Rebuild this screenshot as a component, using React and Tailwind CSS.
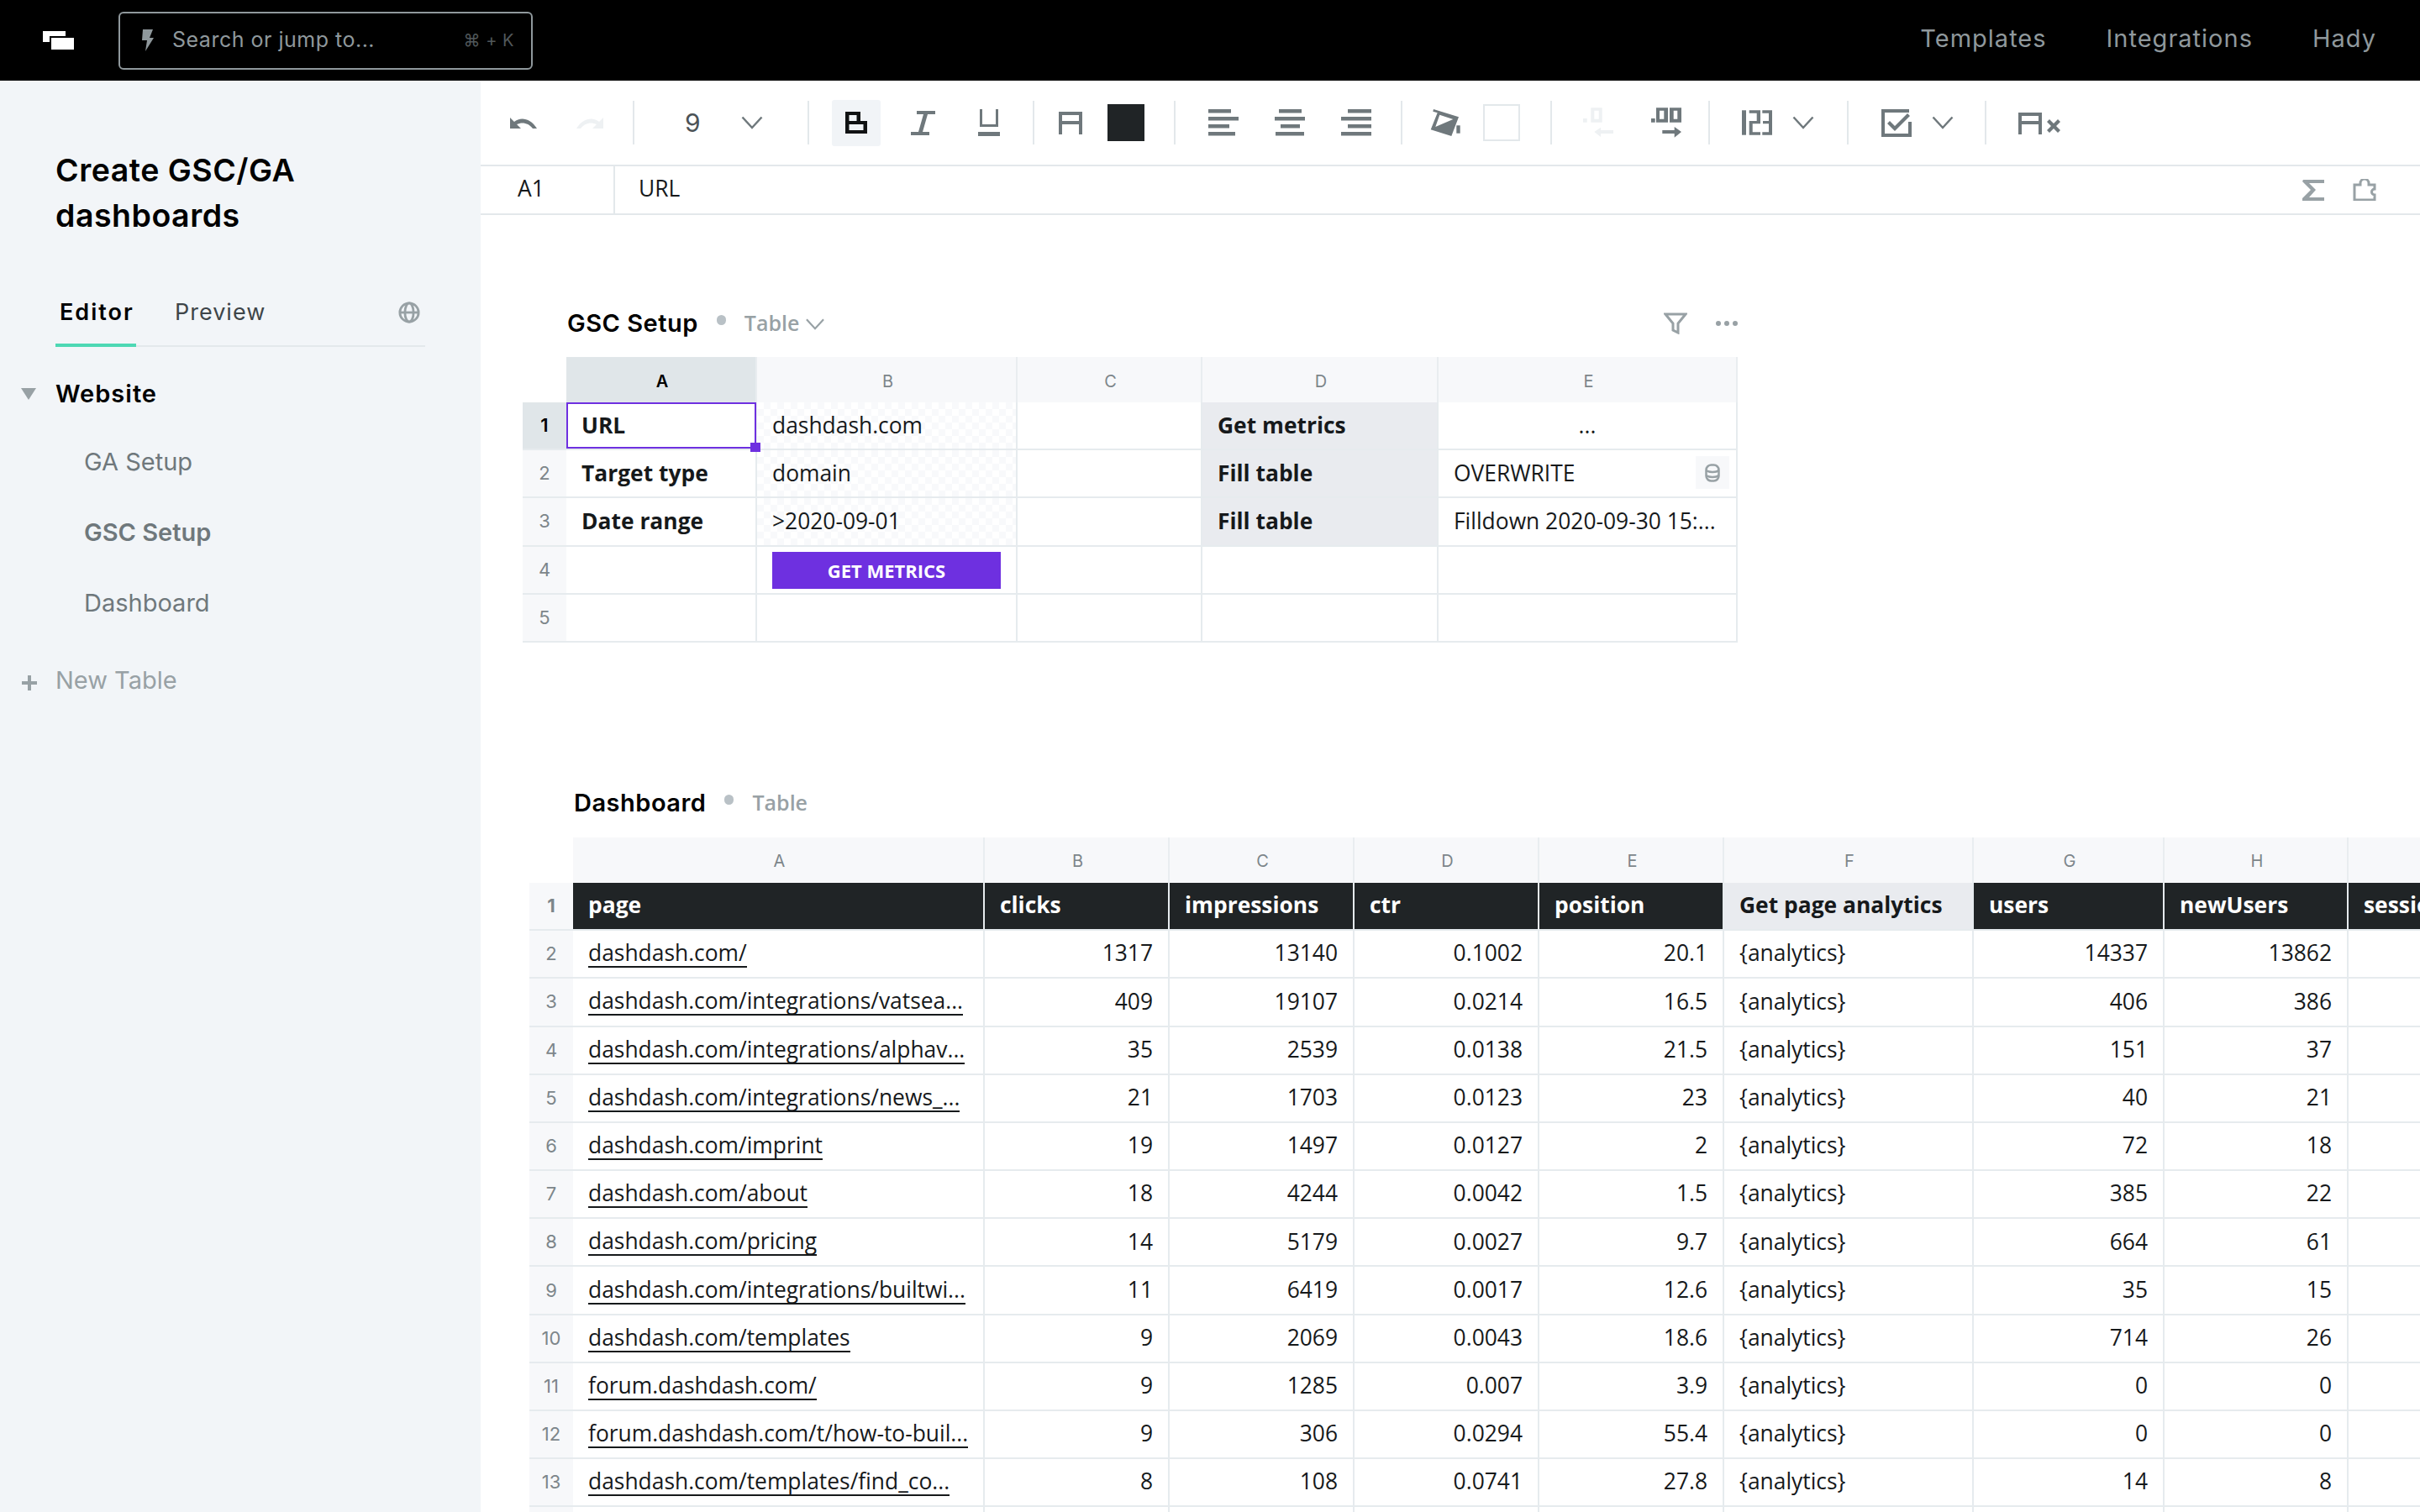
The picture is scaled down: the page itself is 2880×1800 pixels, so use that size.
import React from 'react';

const GROTESK = 'font-["Inter",sans-serif]';
const CELL = 'font-["Open_Sans",sans-serif]';

const SETUP_COLS = [
  { name: 'A', w: 'w-[227px]', active: true },
  { name: 'B', w: 'w-[310px]' },
  { name: 'C', w: 'w-[220px]' },
  { name: 'D', w: 'w-[281px]' },
  { name: 'E', w: 'w-[356px]' },
];

const DASH_COLS = [
  { name: 'A', w: 'w-[490px]', title: 'page' },
  { name: 'B', w: 'w-[220px]', title: 'clicks' },
  { name: 'C', w: 'w-[220px]', title: 'impressions' },
  { name: 'D', w: 'w-[220px]', title: 'ctr' },
  { name: 'E', w: 'w-[220px]', title: 'position' },
  { name: 'F', w: 'w-[297px]', title: 'Get page analytics', light: true },
  { name: 'G', w: 'w-[227px]', title: 'users' },
  { name: 'H', w: 'w-[219px]', title: 'newUsers' },
  { name: 'I', w: 'w-[220px]', title: 'sessions' },
];

const DASH_ROWS = [
  ['dashdash.com/', '1317', '13140', '0.1002', '20.1', '14337', '13862'],
  ['dashdash.com/integrations/vatsea...', '409', '19107', '0.0214', '16.5', '406', '386'],
  ['dashdash.com/integrations/alphav...', '35', '2539', '0.0138', '21.5', '151', '37'],
  ['dashdash.com/integrations/news_...', '21', '1703', '0.0123', '23', '40', '21'],
  ['dashdash.com/imprint', '19', '1497', '0.0127', '2', '72', '18'],
  ['dashdash.com/about', '18', '4244', '0.0042', '1.5', '385', '22'],
  ['dashdash.com/pricing', '14', '5179', '0.0027', '9.7', '664', '61'],
  ['dashdash.com/integrations/builtwi...', '11', '6419', '0.0017', '12.6', '35', '15'],
  ['dashdash.com/templates', '9', '2069', '0.0043', '18.6', '714', '26'],
  ['forum.dashdash.com/', '9', '1285', '0.007', '3.9', '0', '0'],
  ['forum.dashdash.com/t/how-to-buil...', '9', '306', '0.0294', '55.4', '0', '0'],
  ['dashdash.com/templates/find_co...', '8', '108', '0.0741', '27.8', '14', '8'],
];

const GRAY = '#6f787c';
const OFF = '#eef1f3';

function Icon({ w, h, vb, className = '', children }) {
  return (
    <svg width={w} height={h} viewBox={vb} fill="none" className={`shrink-0 ${className}`}>
      {children}
    </svg>
  );
}

function Chevron({ w = 26, h = 16, color = GRAY, className = '' }) {
  return (
    <Icon w={w} h={h} vb="0 0 26 16" className={className}>
      <path d="M1.500 1.500L13 14 24.500 1.500" stroke={color} strokeWidth="2.500" />
    </Icon>
  );
}

function Sep({ className }) {
  return <div className={`w-[2px] h-[52px] bg-[#e3e8eb] shrink-0 ${className}`} />;
}

function AlignIcon({ className, x, widths }) {
  return (
    <Icon w={36} h={32} vb="0 0 36 32" className={className}>
      {x.map((ox, i) => (
        <rect key={i} x={ox} y={i * 9} width={widths[i]} height={4.5} fill={GRAY} />
      ))}
    </Icon>
  );
}

function Toolbar() {
  return (
    <div className="h-[102px] shrink-0 border-b-2 border-[#e3e8eb] flex items-center">
      <Icon w={34} h={16} vb="0 0 34 16" className="ml-[34px]">
        <path d="M1 15V2l5 5c7-6 19-5 27 8h-5C23 8 15 7 9 10l5 5z" fill={GRAY} />
      </Icon>
      <Icon w={38} h={16} vb="0 0 34 16" className="ml-[43px]">
        <path d="M33 15V2l-5 5C21 1 9 2 1 15h5C11 8 19 7 25 10l-5 5z" fill={OFF} />
      </Icon>
      <Sep className="ml-[32px]" />
      <span className={`ml-[60px] w-[17px] shrink-0 text-[30px] leading-none text-[#4c5357] ${GROTESK}`}>9</span>
      <Chevron className="ml-[50px]" />
      <Sep className="ml-[53px]" />
      <div className="ml-[27px] w-[58px] h-[55px] shrink-0 bg-[#f1f4f7] rounded-[3px] flex items-center justify-center">
        <Icon w={28} h={28} vb="0 0 28 28">
          <path d="M1 1h18v11h8v15H1z M5.500 5v7h9V5z M5.500 16v7h17v-7z" fill="#101213" fillRule="evenodd" />
        </Icon>
      </div>
      <Icon w={30} h={29} vb="0 0 30 29" className="ml-[35px]">
        <path d="M8 0h22v4h-9l-6 21h8v4H1v-4h9l6-21H8z" fill={GRAY} />
      </Icon>
      <Icon w={26} h={32} vb="0 0 26 32" className="ml-[51px]">
        <path d="M2 0v21h22V0h-3v18H5V0zM0 27h26v5H0z" fill={GRAY} />
      </Icon>
      <Sep className="ml-[39px]" />
      <Icon w={28} h={27} vb="0 0 28 27" className="ml-[29px]">
        <path d="M0 0h28v27h-4V15H4v12H0zM4 4v7h20V4z" fill={GRAY} fillRule="evenodd" />
      </Icon>
      <div className="ml-[30px] w-[44px] h-[44px] shrink-0 bg-[#202426]" />
      <Sep className="ml-[35px]" />
      <AlignIcon className="ml-[39px]" x={[0, 0, 0, 0]} widths={[27, 36, 25, 32]} />
      <AlignIcon className="ml-[43px]" x={[5, 0, 7, 1]} widths={[27, 36, 23, 34]} />
      <AlignIcon className="ml-[43px]" x={[8, 0, 8, 0]} widths={[28, 36, 28, 36]} />
      <Sep className="ml-[35px]" />
      <Icon w={37} h={34} vb="12 13 37 34" className="ml-[33px]">
        <path d="M16 14l30 9.300L37.300 46l-24.600-7.700 8-20-5.400-1.600zM23.300 20.700l16 5.300-21 9z" fill={GRAY} fillRule="evenodd" />
        <rect x="43.300" y="33.300" width="4.400" height="9.400" fill={GRAY} />
      </Icon>
      <div className="ml-[26px] w-[44px] h-[44px] shrink-0 border-2 border-[#e3e8eb]" />
      <Sep className="ml-[36px]" />
      <Icon w={38} h={36} vb="193 13 38 36" className="ml-[36px]">
        <path d="M194 26h4.700v4.700H194zM203.300 13.300h13.400v17.400h-13.400zM207.300 16.700v10h5.400v-10z" fill={OFF} fillRule="evenodd" />
        <path d="M215 40h15v4h-15zM207.300 42l7.700-5.300V48z" fill={OFF} />
      </Icon>
      <Icon w={37} h={36} vb="274 13 37 36" className="ml-[44px]">
        <path d="M274 26h4.700v4.700H274zM280 13.300h14v17.400h-14zM284 16.700v10h5.300v-10zM296 13.300h14v17.400h-14zM300.700 16.700v10h4.600v-10z" fill={GRAY} fillRule="evenodd" />
        <path d="M287.300 40h14.400v4h-14.400zM301.700 36l8.300 6-8.300 6.700z" fill={GRAY} />
      </Icon>
      <Sep className="ml-[31px]" />
      <Icon w={36} h={30} vb="384 17 36 30" className="ml-[38px]">
        <path d="M384 17.300h5v29.400h-5z" fill={GRAY} />
        <path d="M392.700 17.300H406v16h-9.300v10H406v3.400h-13.300V30h9v-9.300h-9z" fill={GRAY} />
        <path d="M408.300 17.300H420v29.400h-11.700v-3.400h7.700V33.300h-7v-3.300h7v-9.300h-7.700z" fill={GRAY} />
      </Icon>
      <Chevron className="ml-[24px]" />
      <Sep className="ml-[39px]" />
      <Icon w={36} h={33} vb="0 0 36 33" className="ml-[39px]">
        <path d="M0 0h33v4H4v25h28V15h4v18H0z" fill={GRAY} />
        <path d="M7 17l3-3 6 6L31 5l3 3-18 18z" fill={GRAY} />
      </Icon>
      <Chevron className="ml-[24px]" />
      <Sep className="ml-[37px]" />
      <Icon w={54} h={26} vb="0 0 54 26" className="ml-[38px] mt-[2px]">
        <path d="M0 0h28v26h-4V14H4v12H0zM4 4v6h20V4z" fill={GRAY} fillRule="evenodd" />
        <path d="M34 11l3-3 5 5 5-5 3 3-5 5 5 5-3 3-5-5-5 5-3-3 5-5z" fill={GRAY} />
      </Icon>
    </div>
  );
}

function FormulaBar() {
  return (
    <div className={`h-[58px] shrink-0 border-b-2 border-[#e3e8eb] flex items-center text-[26.4px] text-[#16191b] ${CELL}`}>
      <div className="w-[160px] h-full border-r-2 border-[#e3e8eb] pl-[44px] pb-[2px] flex items-center">A1</div>
      <div className="pl-[28px] pb-[2px] flex-1">URL</div>
      <div className="flex items-center gap-[34px] pr-[52px]">
        <Icon w={26} h={26} vb="0 0 26 26">
          <path d="M1 1h25v4H8l8 8-8 9h18v4H0v-3l10-10L0 3z" fill="#98a1a5" />
        </Icon>
        <Icon w={28} h={26} vb="0 0 28 26">
          <path d="M2 7h7V5a5 5 0 0 1 10 0v2h7v5a3.500 3.500 0 0 0 0 7v6H2z" stroke="#98a1a5" strokeWidth="3" />
        </Icon>
      </div>
    </div>
  );
}

function Sidebar() {
  return (
    <aside className={`w-[572px] shrink-0 h-full bg-[#f2f5f8] ${GROTESK}`}>
      <h1 className="pl-[66px] pt-[80px] text-[37.5px] leading-[54px] font-semibold tracking-[0.5px] text-black">
        Create GSC/GA<br />dashboards
      </h1>
      <div className="ml-[66px] mr-[66px] mt-[58px] h-[71px] border-b-2 border-[#e3e8eb] flex items-start">
        <div className="w-[96px] h-[71px] border-b-4 border-[#4dd8b4] pl-[5px] pt-[14px] text-[27px] leading-[32px] font-semibold tracking-[2px] text-black">Editor</div>
        <div className="ml-[46px] pt-[14px] text-[27px] leading-[32px] tracking-[1px] text-[#3e4549]">Preview</div>
        <svg width="26" height="26" viewBox="0 0 28 28" fill="none" stroke="#98a1a5" strokeWidth="3" className="ml-auto mr-[6px] mt-[17px]">
          <circle cx="14" cy="14" r="12" />
          <ellipse cx="14" cy="14" rx="5.500" ry="12" />
          <path d="M2 14h24" />
        </svg>
      </div>
      <div className="mt-[36px] flex items-center h-[40px]">
        <div className="ml-[25px] w-0 h-0 border-x-[9px] border-x-transparent border-t-[14px] border-t-[#98a1a5]" />
        <span className="ml-[23px] text-[29px] font-semibold tracking-[1px] text-black">Website</span>
      </div>
      <div className="flex flex-col pl-[100px] text-[29px] text-[#6f787c]">
        <div className="mt-[41px] leading-[40px]">GA Setup</div>
        <div className="mt-[44px] leading-[40px] font-semibold">GSC Setup</div>
        <div className="mt-[44px] leading-[40px]">Dashboard</div>
      </div>
      <div className="mt-[52px] flex items-center h-[40px]">
        <svg width="18" height="18" viewBox="0 0 18 18" className="ml-[26px] mt-[6px]">
          <path d="M7 0h4v7h7v4h-7v7H7v-7H0V7h7z" fill="#98a1a5" />
        </svg>
        <span className="ml-[22px] text-[29px] text-[#98a1a5]">New Table</span>
      </div>
    </aside>
  );
}

function TableTitle({ name, chevron, className }) {
  return (
    <div className={`flex items-center ${className}`}>
      <span className={`text-[29px] font-semibold tracking-[0.5px] text-black ${GROTESK}`}>{name}</span>
      <span className="ml-[22px] -mt-[8px] w-[11px] h-[12px] rounded-full bg-[#b9c1c6]" />
      <span className={`ml-[22px] text-[25px] font-semibold text-[#98a1a5] ${CELL}`}>Table</span>
      {chevron && <Chevron w={24} h={14} color="#98a1a5" className="ml-[7px] mt-[2px]" />}
    </div>
  );
}

function ColHeader({ cols }) {
  return (
    <div className={`flex h-[54px] ${GROTESK}`}>
      <div className="w-[52px] shrink-0" />
      {cols.map((c) => (
        <div
          key={c.name}
          className={`${c.w} shrink-0 flex items-center justify-center pl-[3px] pt-[3px] border-r-2 border-[#e9edf0] text-[20px] ${
            c.active ? 'bg-[#e0e6e9] text-black font-semibold' : 'bg-[#f7f8fa] text-[#7d868a]'
          }`}
        >
          {c.name}
        </div>
      ))}
    </div>
  );
}

function RowHead({ n, active }) {
  return (
    <div
      className={`w-[52px] shrink-0 flex items-center justify-center text-[22px] border-b-2 border-[#e6ebee] ${GROTESK} ${
        active ? 'bg-[#e0e6e9] text-black font-semibold' : 'bg-[#f7f8fa] text-[#7d868a]'
      }`}
    >
      {n}
    </div>
  );
}

const CHECKER = 'bg-[repeating-conic-gradient(#f8f9fb_0_25%,#ffffff_0_50%)] bg-[length:16px_16px]';

function Cell({ w, className = '', children }) {
  return (
    <div className={`${w} shrink-0 h-full border-r-2 border-b-2 border-[#e6ebee] flex items-center px-[18px] overflow-hidden whitespace-nowrap relative ${className}`}>
      {children}
    </div>
  );
}

function GscSetup() {
  const rows = [
    { a: 'URL', b: 'dashdash.com', d: 'Get metrics', e: '...' },
    { a: 'Target type', b: 'domain', d: 'Fill table', e: 'OVERWRITE' },
    { a: 'Date range', b: '>2020-09-01', d: 'Fill table', e: 'Filldown 2020-09-30 15:...' },
    { button: true },
    {},
  ];
  return (
    <section className="pl-[50px]">
      <div className="flex items-center w-[1446px] h-[40px]">
        <TableTitle name="GSC Setup" chevron className="ml-[53px]" />
        <svg width="28" height="26" viewBox="0 0 28 26" fill="none" stroke="#98a1a5" strokeWidth="3" className="ml-auto">
          <path d="M2 2h24l-9 11v11l-6-3v-8z" />
        </svg>
        <div className="ml-[34px] flex gap-[4px]">
          <span className="w-[6px] h-[6px] bg-[#98a1a5] rounded-full" />
          <span className="w-[6px] h-[6px] bg-[#98a1a5] rounded-full" />
          <span className="w-[6px] h-[6px] bg-[#98a1a5] rounded-full" />
        </div>
      </div>
      <div className="mt-[20px]">
        <ColHeader cols={SETUP_COLS} />
        {rows.map((r, i) => (
          <div key={i} className={`relative flex h-[57.2px] text-[26.4px] text-[#16191b] ${CELL}`}>
            <RowHead n={i + 1} active={i === 0} />
            <Cell w="w-[227px]" className="font-bold">{r.a}</Cell>
            <Cell w="w-[310px]" className={i < 3 ? CHECKER : ''}>
              {r.b}
              {r.button && (
                <div className="w-full h-[44px] mt-[2px] bg-[#6e30e0] text-white text-[22px] font-bold flex items-center justify-center">GET METRICS</div>
              )}
            </Cell>
            <Cell w="w-[220px]" />
            <Cell w="w-[281px]" className={r.d ? 'bg-[#e9ebef] font-bold' : ''}>{r.d}</Cell>
            <Cell w="w-[356px]" className={i === 0 ? 'justify-center' : ''}>
              {r.e}
              {i === 1 && (
                <div className="absolute right-[8px] top-[7px] w-[40px] h-[39px] bg-[#f7f8fa] flex items-center justify-center">
                  <svg width="18" height="22" viewBox="0 0 18 22" fill="none" stroke="#98a1a5" strokeWidth="2.500">
                    <rect x="1.500" y="1.500" width="15" height="19" rx="6" />
                    <path d="M1.500 8c3 2.500 12 2.500 15 0M1.500 14c3 2.500 12 2.500 15 0" />
                  </svg>
                </div>
              )}
            </Cell>
            {i === 0 && (
              <div className="absolute left-[52px] top-0 w-[226px] h-[55px] border-2 border-[#6e30e0] z-10">
                <div className="absolute -right-[7px] -bottom-[6px] w-[12px] h-[11px] bg-[#6e30e0]" />
              </div>
            )}
          </div>
        ))}
      </div>
    </section>
  );
}

function DashboardTable() {
  const rows = [...DASH_ROWS, ['', '', '', '', '', '', '']];
  return (
    <section className="pl-[58px] mt-[171px]">
      <TableTitle name="Dashboard" className="ml-[53px] h-[40px]" />
      <div className="mt-[21px] w-[2290px]">
        <ColHeader cols={DASH_COLS} />
        <div className={`flex h-[57.2px] text-[26.4px] font-bold ${CELL}`}>
          <RowHead n={1} />
          {DASH_COLS.map((c) => (
            <div
              key={c.name}
              className={`${c.w} shrink-0 border-r-2 border-b-2 border-[#e6ebee] flex items-center px-[18px] pb-[2px] overflow-hidden whitespace-nowrap ${
                c.light ? 'bg-[#e9ebef] text-[#16191b]' : 'bg-[#202426] text-white'
              }`}
            >
              {c.title}
            </div>
          ))}
        </div>
        {rows.map((r, i) => (
          <div key={i} className={`flex h-[57.2px] text-[26.4px] text-[#16191b] ${CELL}`}>
            <RowHead n={i < 12 ? i + 2 : ''} />
            <Cell w="w-[490px]" className="pb-[1px]"><span className="border-b-2 border-[#16191b] leading-[32px]">{r[0]}</span></Cell>
            <Cell w="w-[220px]" className="justify-end pb-[1px]">{r[1]}</Cell>
            <Cell w="w-[220px]" className="justify-end pb-[1px]">{r[2]}</Cell>
            <Cell w="w-[220px]" className="justify-end pb-[1px]">{r[3]}</Cell>
            <Cell w="w-[220px]" className="justify-end pb-[1px]">{r[4]}</Cell>
            <Cell w="w-[297px]" className="pb-[1px]">{i < 12 ? '{analytics}' : ''}</Cell>
            <Cell w="w-[227px]" className="justify-end pb-[1px]">{r[5]}</Cell>
            <Cell w="w-[219px]" className="justify-end pb-[1px]">{r[6]}</Cell>
            <Cell w="w-[220px]" />
          </div>
        ))}
      </div>
    </section>
  );
}

export default function App() {
  return (
    <div className="w-[2880px] h-[1800px] overflow-hidden flex flex-col bg-white">
      <header className={`h-[96px] shrink-0 bg-black flex items-center ${GROTESK}`}>
        <svg width="37" height="22" viewBox="0 0 37 22" className="ml-[51px]">
          <rect x="0" y="0" width="27" height="13" fill="#fff" />
          <rect x="8" y="6" width="29" height="16" fill="#000" />
          <rect x="10" y="8" width="27" height="14" fill="#fff" />
        </svg>
        <div className="ml-[53px] w-[493px] h-[69px] border-2 border-[#8f989c] rounded-[6px] flex items-center">
          <svg width="16" height="26" viewBox="0 0 16 26" className="ml-[24px]">
            <path d="M3 0h12l-4 10h5L6 26l2-13H2z" fill="#8f989c" />
          </svg>
          <span className="ml-[22px] text-[25px] tracking-[0.5px] text-[#8f989c]">Search or jump to...</span>
          <span className="ml-auto mr-[20px] text-[20px] tracking-[0.5px] text-[#51585b]">⌘ + K</span>
        </div>
        <nav className="ml-auto mr-[52px] pb-[4px] flex gap-[71px] text-[29px] tracking-[1px] text-[#8f989c]">
          <span>Templates</span>
          <span>Integrations</span>
          <span>Hady</span>
        </nav>
      </header>
      <div className="flex-1 flex min-h-0">
        <Sidebar />
        <main className="flex-1 min-w-0 flex flex-col overflow-hidden">
          <Toolbar />
          <FormulaBar />
          <div className="flex-1 overflow-hidden pt-[109px]">
            <GscSetup />
            <DashboardTable />
          </div>
        </main>
      </div>
    </div>
  );
}
